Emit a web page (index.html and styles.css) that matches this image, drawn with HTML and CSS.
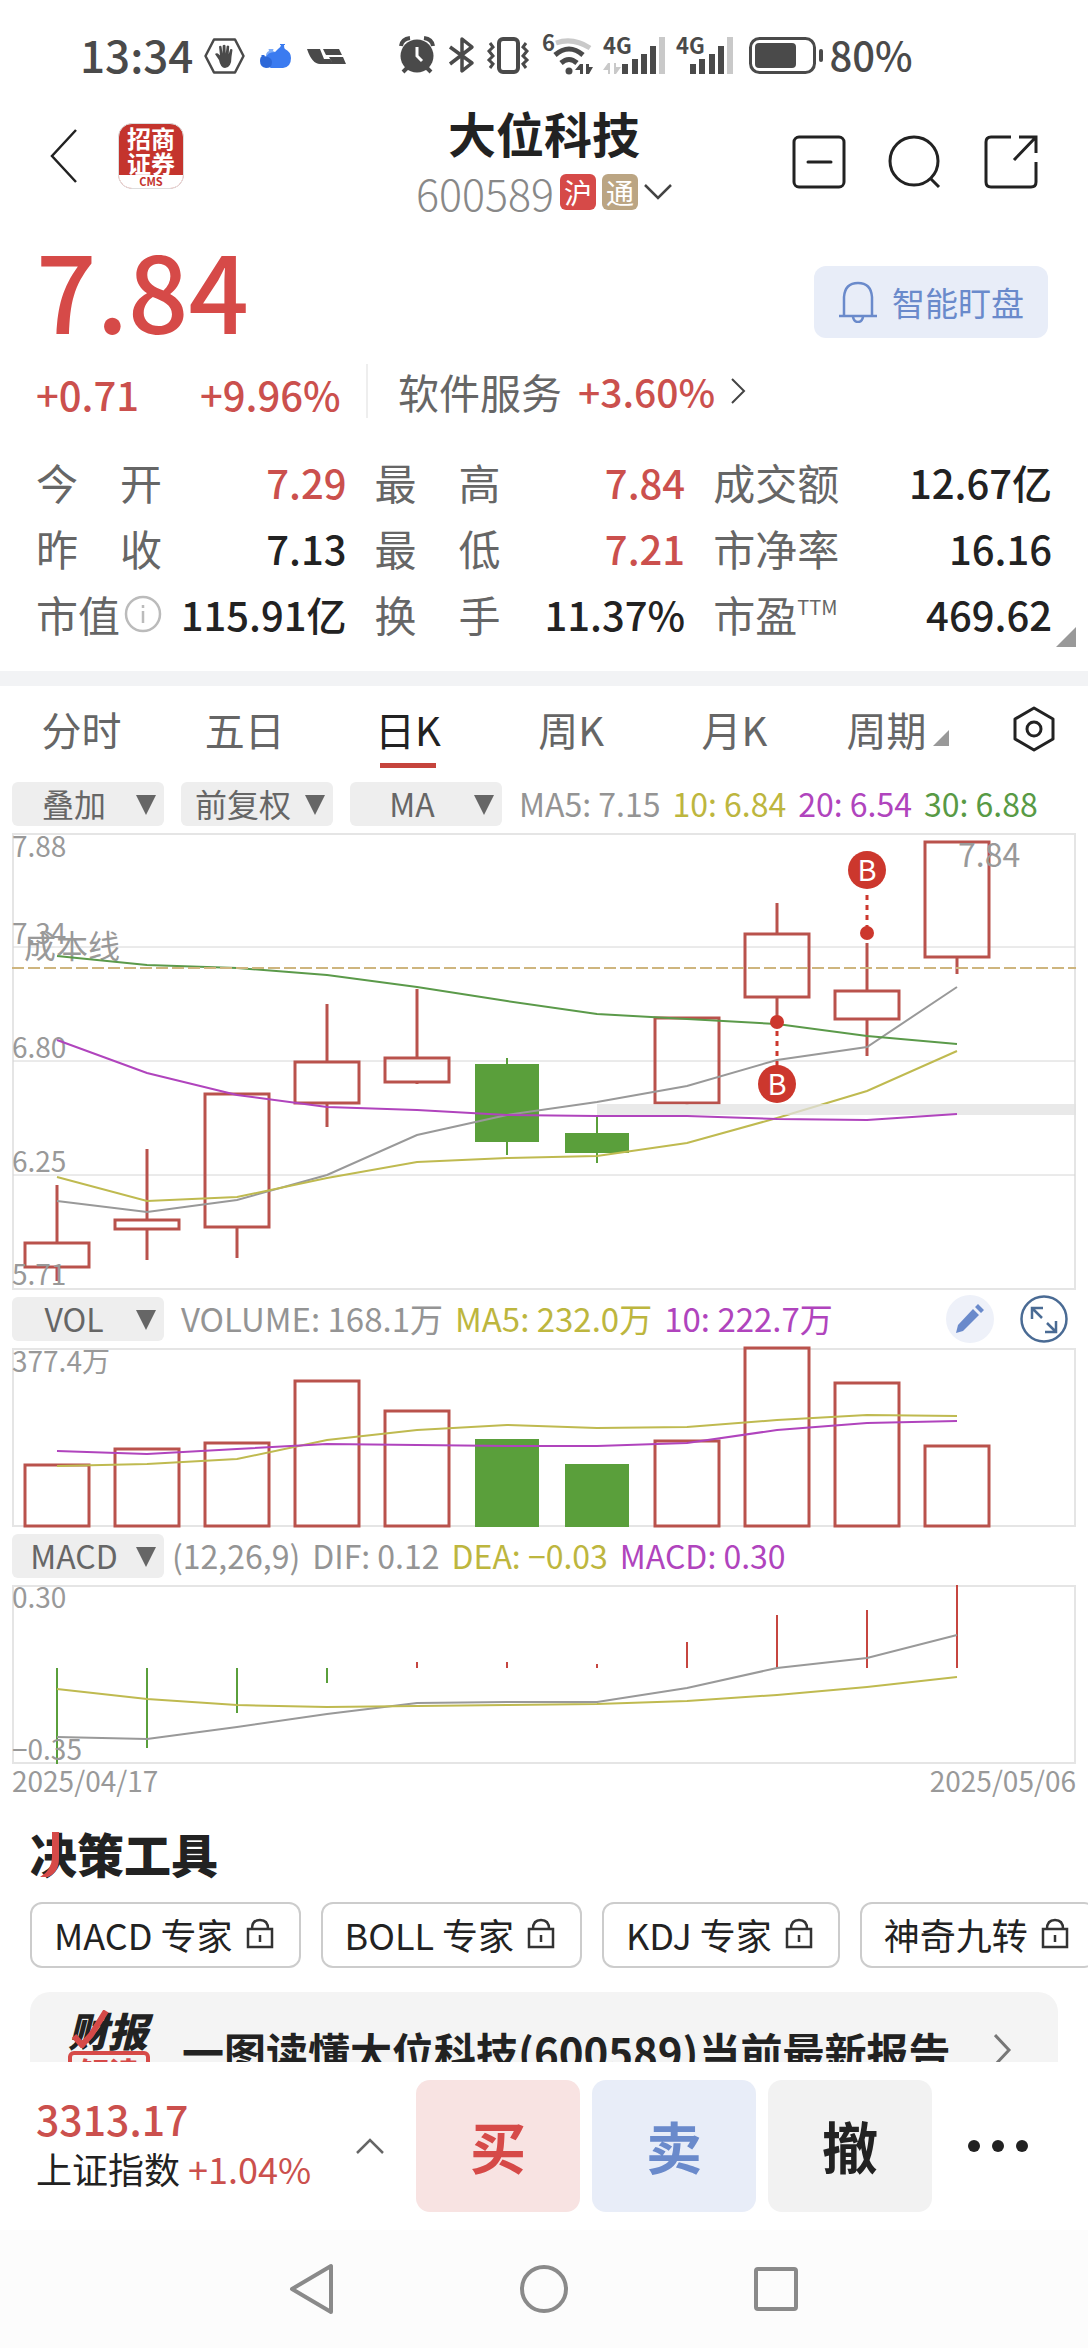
FILE: index.html
```html
<!DOCTYPE html>
<html lang="zh-CN">
<head>
<meta charset="utf-8">
<meta name="viewport" content="width=device-width, initial-scale=1">
<title>大位科技 600589</title>
<link rel="stylesheet" href="styles.css">
</head>
<body>
<div class="status">
  <span class="status-text">13:34</span>
  <svg class="status-left" width="144" height="44" viewBox="202 34 144 44" aria-hidden="true">
    <path d="M213 39.500h21l8.500 16.500-8.500 16.500h-21l-8.500-16.500z" fill="none" stroke="#4a4a4a" stroke-width="2.500" stroke-linejoin="round"/>
    <path d="M218 60l-4-6q2-1.500 4 .5l1 1-1-9q1.500-1.500 2.500 0l1 7 .2-8q1.500-1.500 2.800 0l.2 8 1-7.500q1.500-1 2.500.3l-.5 8 1.500-5q1.500-1 2.300.5l-1 7q0 11-6.500 11.300-4.500-.3-6-8.100z" fill="#4a4a4a"/>
    <path d="M265 60q-1-8 3-9l-.5-2h5l-.5 2q5 1 5 9z" fill="#7fadf7"/>
    <path d="M270 68q-6-2-5-10 1-6 9-6l3-3q3-2 3-4h-1v-1h5v1h-1q0 3 1 4 6 3 6 9 0 9-8 10z" fill="#3b7bf0"/>
    <path d="M265 68q-6-1-6-7 0-4 2-5l-1-1h4l-1 1q8 1 8 6 0 6-6 6z" fill="#2d68d8"/>
    <path d="M306 49h13l4 10h6l3 5h-13q-8 0-13-15zM322 49h16l3 6h-16zM328 57h14l3 7h-13z" fill="#4a4a4a"/>
  </svg>
  <svg class="status-right" width="426" height="44" viewBox="396 34 426 44" aria-hidden="true">
    <g fill="#4a4a4a" stroke="#4a4a4a">
      <circle cx="416" cy="56" r="16.500" stroke="none"/>
      <path d="M400 46q1-7 9-8M432 46q-1-7-9-8M402 72l6-6M430 72l-6-6" fill="none" stroke-width="4"/>
      <path d="M416 47v9l5 5" fill="none" stroke="#fff" stroke-width="3"/>
      <path d="M449 47l22 16-10 8V39l10 8-22 17" fill="none" stroke-width="3.500" stroke-linejoin="round"/>
      <rect x="498" y="39" width="19" height="33" rx="4" fill="none" stroke-width="4"/>
      <path d="M489 43l3 4-4 4 4 5-4 4 4 4-3 4M525 43l-3 4 4 4-4 5 4 4-4 4 3 4" fill="none" stroke-width="3"/>
      <path d="M555 43q17-6 34 5" fill="none" stroke="#c9c9c9" stroke-width="5"/>
      <path d="M554 55q14-12 28 0M560 63q8-7 16 0" fill="none" stroke-width="5"/>
      <circle cx="568" cy="71" r="3.500" stroke="none"/>
      <path d="M574 70h5v-6zM579 64h3v10h-3zM585 64h3v10h-3zM588 74l4-7h-4z" stroke="none"/>
      <path d="M602 70h5v-7zM607 63h2v11h-2zM613 63h2v11h-2zM615 74l5-7h-5z" fill="#c9c9c9" stroke="none"/>
      <path d="M621 64h6v10h-6zM631 59h6v15h-6zM640 54h6v20h-6zM649 46h6v28h-6zM689 64h6v10h-6zM698 59h6v15h-6zM708 54h6v20h-6zM717 46h6v28h-6z" stroke="none"/>
      <path d="M658 37h6v37h-6zM726 37h6v37h-6z" fill="#c9c9c9" stroke="none"/>
      <rect x="749.500" y="38.500" width="64" height="34" rx="9" fill="none" stroke-width="3"/>
      <rect x="754" y="43" width="41" height="25" rx="4" stroke="none"/>
      <rect x="818" y="49" width="4" height="13" rx="2" stroke="none"/>
    </g>
    <text x="541" y="51" class="net-mark">6</text>
    <text x="602" y="54" class="net-mark">4G</text>
    <text x="675" y="54" class="net-mark">4G</text>
  </svg>
  <span class="status-text battery">80%</span>
</div>

<header class="header">
  <div class="header-left">
    <button class="icon-btn" aria-label="返回"><svg width="28" height="54" viewBox="0 0 28 54"><path d="M26 1L2 27l24 26" fill="none" stroke="#222" stroke-width="2.500"/></svg></button>
    <div class="broker">
      <div class="broker-name">招商<br>证券</div>
      <div class="broker-code">CMS</div>
    </div>
  </div>
  <div class="header-title">
    <h1>大位科技</h1>
    <button class="code-row">
      <span class="code">600589</span>
      <span class="tag tag-red">沪</span>
      <span class="tag tag-tan">通</span>
      <svg width="28" height="18" viewBox="0 0 28 18"><path d="M1 2l13 13L27 2" fill="none" stroke="#444" stroke-width="2.500"/></svg>
    </button>
  </div>
  <div class="header-right">
    <button class="icon-btn" aria-label="移除自选"><svg width="54" height="54" viewBox="0 0 54 54" fill="none" stroke="#222" stroke-width="3"><rect x="2" y="2" width="50" height="50" rx="5"/><path d="M16 27h23" stroke-linecap="round"/></svg></button>
    <button class="icon-btn" aria-label="搜索"><svg width="54" height="54" viewBox="0 0 54 54" fill="none" stroke="#222" stroke-width="3"><circle cx="26" cy="26" r="24"/><path d="M42 43l9 9"/></svg></button>
    <button class="icon-btn" aria-label="分享"><svg width="54" height="54" viewBox="0 0 54 54" fill="none" stroke="#222" stroke-width="3"><path d="M27 2H7q-5 0-5 5v40q0 5 5 5h40q5 0 5-5V27M35 2h17v16M52 2L30 25"/></svg></button>
  </div>
</header>

<main class="content">
  <section class="quote">
    <div class="price-row">
      <div class="price">7.84</div>
      <button class="watch-btn">
        <svg width="40" height="42" viewBox="0 0 40 42" fill="none" stroke="#6a8acb" stroke-width="2.500"><path d="M1 35h38M6 35V16Q7 2 20 2t14 14v19M15 36q1 5 5 5t5-5"/></svg>
        智能盯盘
      </button>
    </div>
    <div class="change-row">
      <span class="up change">+0.71</span>
      <span class="up change change-pct">+9.96%</span>
      <a class="sector" href="#sector">
        <span>软件服务</span>
        <span class="up">+3.60%</span>
        <svg width="16" height="26" viewBox="0 0 16 26"><path d="M1 1l12 12L1 25" fill="none" stroke="#444" stroke-width="2"/></svg>
      </a>
    </div>
    <dl class="stats">
      <div><dt>今开</dt><dd class="up">7.29</dd></div>
      <div><dt>最高</dt><dd class="up">7.84</dd></div>
      <div><dt>成交额</dt><dd>12.67亿</dd></div>
      <div><dt>昨收</dt><dd>7.13</dd></div>
      <div><dt>最低</dt><dd class="up">7.21</dd></div>
      <div><dt>市净率</dt><dd>16.16</dd></div>
      <div><dt class="natural">市值<svg width="38" height="38" viewBox="0 0 38 38" fill="none" stroke="#bbb" stroke-width="2.500"><circle cx="19" cy="19" r="17"/><path d="M19 16v12M19 10v3"/></svg></dt><dd>115.91亿</dd></div>
      <div><dt>换手</dt><dd>11.37%</dd></div>
      <div><dt class="natural">市盈<sup>TTM</sup></dt><dd>469.62</dd></div>
    </dl>
    <svg class="expand-corner" width="20" height="20" viewBox="0 0 20 20"><path d="M20 0v20H0z" fill="#999"/></svg>
  </section>

  <nav class="tabs">
    <button>分时</button>
    <button>五日</button>
    <button class="active">日K</button>
    <button>周K</button>
    <button>月K</button>
    <button class="period">周期<svg width="16" height="16" viewBox="0 0 16 16"><path d="M16 0v16H0z" fill="#999"/></svg></button>
    <button aria-label="设置"><svg width="44" height="46" viewBox="0 0 44 46" fill="none" stroke="#222" stroke-width="3"><path d="M22 2l19 11v20L22 44 3 33V13z" stroke-linejoin="round"/><circle cx="22" cy="23" r="7"/></svg></button>
  </nav>

  <section class="charts">
    <figure class="panel">
      <div class="panel-head">
        <label class="picker"><select aria-label="叠加"><option>叠加</option></select><svg width="20" height="20" viewBox="0 0 20 20"><path d="M0 0h20L10 20z"/></svg></label>
        <label class="picker"><select aria-label="复权"><option>前复权</option></select><svg width="20" height="20" viewBox="0 0 20 20"><path d="M0 0h20L10 20z"/></svg></label>
        <label class="picker"><select aria-label="主图指标"><option>MA</option></select><svg width="20" height="20" viewBox="0 0 20 20"><path d="M0 0h20L10 20z"/></svg></label>
        <div class="legend"><span class="c-gray">MA5: 7.15</span><span class="c-yellow">10: 6.84</span><span class="c-purple">20: 6.54</span><span class="c-green">30: 6.88</span></div>
      </div>
      <svg class="chart" viewBox="12 833 1064 457" role="img" aria-label="日K线">
        <rect class="frame" x="13" y="834" width="1062" height="455"/>
        <path class="grid" d="M13 947H1075M13 1061H1075M13 1175H1075"/>
        <g class="axis"><text x="12" y="857">7.88</text><text x="12" y="944">7.34</text><text x="12" y="1058">6.80</text><text x="12" y="1172">6.25</text></g>
        <g class="rise">
          <path d="M57 1185V1243M57 1267V1281M147 1149V1220M147 1229V1260M237 1227V1258M327 1004V1062M327 1103V1127M417 989V1058M417 1082V1084M687 1103V1105M777 903V934M777 997V1016M867 943V991M867 1019V1056M957 957V974"/>
          <rect x="25" y="1243" width="64" height="24"/><rect x="115" y="1220" width="64" height="9"/><rect x="205" y="1094" width="64" height="133"/><rect x="295" y="1062" width="64" height="41"/><rect x="385" y="1058" width="64" height="24"/><rect x="655" y="1018" width="64" height="85"/><rect x="745" y="934" width="64" height="63"/><rect x="835" y="991" width="64" height="28"/><rect x="925" y="842" width="64" height="115"/>
        </g>
        <g class="fall"><path d="M507 1058V1155M597 1117V1163"/><rect x="476" y="1065" width="62" height="76"/><rect x="566" y="1134" width="62" height="18"/></g>
        <g class="axis"><text x="12" y="1285">5.71</text></g>
        <text class="note" x="24" y="958">成本线</text>
        <text class="note" x="958" y="867">7.84</text>
        <polyline class="line s-gray" points="57,1201 147,1212 237,1200 327,1175 417,1135 507,1115 597,1102 687,1086 777,1060 867,1047 957,987"/>
        <polyline class="line s-yellow" points="57,1177 147,1201 237,1197 327,1178 417,1162 507,1158 597,1156 687,1143 777,1118 867,1091 957,1051"/>
        <rect class="gap-band" x="597" y="1104" width="479" height="11"/>
        <polyline class="line s-purple" points="57,1040 147,1073 237,1095 327,1107 417,1110 507,1115 597,1116 687,1116 777,1119 867,1120 957,1114"/>
        <polyline class="line s-green" points="57,956 147,965 237,968 327,975 417,987 507,1001 597,1014 687,1019 777,1024 867,1036 957,1044"/>
        <path class="cost" d="M12 968H1076"/>
        <g class="mark">
          <path d="M867 895V928M777 1031V1066"/>
          <circle cx="867" cy="870" r="19"/><circle cx="867" cy="933" r="7"/><circle cx="777" cy="1084" r="19"/><circle cx="777" cy="1022" r="7"/>
          <text x="867" y="881">B</text><text x="777" y="1095">B</text>
        </g>
      </svg>
    </figure>

    <figure class="panel">
      <div class="panel-head">
        <label class="picker"><select aria-label="副图指标一"><option>VOL</option></select><svg width="20" height="20" viewBox="0 0 20 20"><path d="M0 0h20L10 20z"/></svg></label>
        <div class="legend legend-volume"><span class="c-gray">VOLUME: 168.1万</span><span class="c-yellow">MA5: 232.0万</span><span class="c-purple">10: 222.7万</span></div>
        <div class="panel-tools">
          <button class="icon-btn" aria-label="画线"><svg width="48" height="48" viewBox="0 0 48 48"><circle cx="24" cy="24" r="24" fill="#eef1f9"/><path d="M10 38l2-8L27 14l6 6-16 16zM29 12l3-3 6 6-3 3z" fill="#6a8acb"/></svg></button>
          <button class="icon-btn" aria-label="全屏"><svg width="48" height="48" viewBox="0 0 48 48" fill="none" stroke="#4a6b94" stroke-width="2.500"><circle cx="24" cy="24" r="22.500"/><path d="M12 24V13h11M12 13l10 10M36 26v11H25M36 37L27 28"/></svg></button>
        </div>
      </div>
      <svg class="chart" viewBox="12 1348 1064 179" role="img" aria-label="成交量">
        <rect class="frame" x="13" y="1349" width="1062" height="177"/>
        <g class="axis"><text x="12" y="1372">377.4万</text></g>
        <g class="rise"><rect x="25" y="1465" width="64" height="61"/><rect x="115" y="1449" width="64" height="77"/><rect x="205" y="1443" width="64" height="83"/><rect x="295" y="1381" width="64" height="145"/><rect x="385" y="1411" width="64" height="115"/><rect x="655" y="1441" width="64" height="85"/><rect x="745" y="1348" width="64" height="178"/><rect x="835" y="1383" width="64" height="143"/><rect x="925" y="1446" width="64" height="80"/></g>
        <g class="fall"><rect x="476" y="1440" width="62" height="86"/><rect x="566" y="1465" width="62" height="61"/></g>
        <polyline class="line s-yellow" points="57,1466 147,1464 237,1459 327,1440 417,1430 507,1425 597,1428 687,1427 777,1420 867,1415 957,1416"/>
        <polyline class="line s-purple" points="57,1451 147,1454 237,1449 327,1444 417,1445 507,1446 597,1446 687,1443 777,1430 867,1423 957,1421"/>
      </svg>
    </figure>

    <figure class="panel">
      <div class="panel-head tight">
        <label class="picker"><select aria-label="副图指标二"><option>MACD</option></select><svg width="20" height="20" viewBox="0 0 20 20"><path d="M0 0h20L10 20z"/></svg></label>
        <div class="legend"><span class="c-gray">(12,26,9)</span><span class="c-gray">DIF: 0.12</span><span class="c-yellow">DEA: −0.03</span><span class="c-purple">MACD: 0.30</span></div>
      </div>
      <svg class="chart" viewBox="12 1585 1064 179" role="img" aria-label="MACD">
        <rect class="frame" x="13" y="1586" width="1062" height="177"/>
        <path class="bar-fall" d="M57 1668V1764M147 1668V1748M237 1668V1713M327 1668V1683"/>
        <path class="bar-rise" d="M417 1668V1662M507 1668V1662M597 1668V1664M687 1668V1642M777 1668V1615M867 1668V1610M957 1668V1585"/>
        <g class="axis"><text x="12" y="1608">0.30</text><text x="12" y="1760">−0.35</text></g>
        <polyline class="line s-gray" points="57,1737 147,1739 237,1727 327,1714 417,1703 507,1702 597,1702 687,1688 777,1668 867,1658 957,1635"/>
        <polyline class="line s-yellow" points="57,1689 147,1699 237,1705 327,1707 417,1706 507,1705 597,1704 687,1701 777,1695 867,1687 957,1677"/>
      </svg>
    </figure>
    <div class="dates"><time>2025/04/17</time><time>2025/05/06</time></div>
  </section>

  <section class="tools">
    <h2>决策工具<svg class="title-stroke" width="20" height="46" viewBox="0 0 20 46"><path d="M12 0h7v26q0 15-11 19H0Q12 38 12 25z" fill="#d64a48"/></svg></h2>
    <div class="pills">
      <button>MACD 专家<svg width="28" height="32" viewBox="0 0 28 32"><path d="M2 11h24v18H2zM6 11Q6 2 14 2t8 9M14 17v7"/></svg></button>
      <button>BOLL 专家<svg width="28" height="32" viewBox="0 0 28 32"><path d="M2 11h24v18H2zM6 11Q6 2 14 2t8 9M14 17v7"/></svg></button>
      <button>KDJ 专家<svg width="28" height="32" viewBox="0 0 28 32"><path d="M2 11h24v18H2zM6 11Q6 2 14 2t8 9M14 17v7"/></svg></button>
      <button>神奇九转<svg width="28" height="32" viewBox="0 0 28 32"><path d="M2 11h24v18H2zM6 11Q6 2 14 2t8 9M14 17v7"/></svg></button>
    </div>
    <a class="report" href="#report">
      <span class="report-logo">
        <span class="report-word">财报<svg class="report-stroke" width="42" height="38" viewBox="0 0 42 38"><path d="M3 26l8 9 9-10L35 1" fill="none" stroke="#d64a48" stroke-width="6"/></svg></span>
        <span class="report-sub">解读</span>
      </span>
      <span class="report-text">一图读懂大位科技(600589)当前最新报告</span>
      <svg width="18" height="32" viewBox="0 0 18 32"><path d="M1 1l14 15L1 31" fill="none" stroke="#777" stroke-width="3"/></svg>
    </a>
  </section>
</main>

<footer class="trade">
  <button class="index">
    <span class="index-value">3313.17</span>
    <span class="index-name">上证指数 <span class="up">+1.04%</span></span>
  </button>
  <svg class="caret" width="28" height="16" viewBox="0 0 28 16"><path d="M1 15L14 2l13 13" fill="none" stroke="#666" stroke-width="2.500"/></svg>
  <button class="action buy">买</button>
  <button class="action sell">卖</button>
  <button class="action cancel">撤</button>
  <button class="icon-btn more" aria-label="更多"><svg width="60" height="12" viewBox="0 0 60 12" fill="#222"><circle cx="6" cy="6" r="6"/><circle cx="30" cy="6" r="6"/><circle cx="54" cy="6" r="6"/></svg></button>
</footer>
<nav class="system-nav">
  <button class="icon-btn" aria-label="系统返回"><svg width="48" height="52" viewBox="0 0 48 52"><path d="M43 3v46L4 26z"/></svg></button>
  <button class="icon-btn" aria-label="主屏幕"><svg width="48" height="52" viewBox="0 0 48 52"><circle cx="24" cy="26" r="22"/></svg></button>
  <button class="icon-btn" aria-label="最近任务"><svg width="48" height="52" viewBox="0 0 48 52"><rect x="4" y="6" width="40" height="40" rx="2"/></svg></button>
</nav>
</body>
</html>
```
FILE: styles.css
```css
* { box-sizing: border-box; }

body {
  margin: 0;
  height: 100vh;
  display: flex;
  flex-direction: column;
  overflow: hidden;
  background: #fff;
  color: #222;
  font-family: "Noto Sans CJK SC", "Noto Sans", sans-serif;
}

button, select { font: inherit; color: inherit; border: 0; background: none; padding: 0; margin: 0; }
a { color: inherit; text-decoration: none; }
h1, h2, dl, dd, figure { margin: 0; }
svg { display: block; flex: none; }
.icon-btn { display: flex; }
.up { color: #cb504d; }

/* system status bar */
.status {
  display: flex;
  align-items: center;
  height: 100px;
  padding: 0 80px;
  flex: none;
}
.status-text { padding-top: 8px; font-size: 44px; line-height: 48px; font-weight: 500; color: #4a4a4a; white-space: nowrap; }
.status-text.battery { font-size: 40px; }
.status svg { overflow: visible; }
.status-left { margin: 12px 0 0 10px; }
.status-right { margin: 12px 6px 0 50px; }
.net-mark { font-size: 22px; font-weight: 700; fill: #4a4a4a; }

/* page header */
.header {
  display: grid;
  grid-template-columns: 1fr auto 1fr;
  align-items: center;
  padding: 0 50px;
  flex: none;
}
.header-left { display: flex; align-items: center; gap: 40px; padding-bottom: 8px; }
.broker {
  width: 66px;
  border-radius: 14px;
  overflow: hidden;
  background: #c4342d;
  border: 1px solid #ddd;
  color: #fff;
  text-align: center;
}
.broker-name { padding-top: 1px; font-size: 24px; line-height: 25px; font-weight: 700; }
.broker-code { background: #fff; color: #c4342d; font-size: 11px; line-height: 13px; font-weight: 700; }
.header-title { display: flex; flex-direction: column; align-items: center; }
.header-title h1 { font-size: 48px; line-height: 64px; font-weight: 700; }
.code-row { display: flex; align-items: center; gap: 6px; height: 56px; }
.code { font-size: 43px; line-height: 48px; font-weight: 300; color: #888; }
.tag { width: 36px; height: 36px; border-radius: 6px; color: #fff; font-size: 28px; line-height: 36px; text-align: center; }
.tag-red { background: #d64a48; }
.tag-tan { background: #bba583; }
.header-right { display: flex; justify-content: flex-end; gap: 42px; padding-top: 4px; }

.content { flex: 1; min-height: 0; overflow: hidden; }

/* quote summary */
.quote { position: relative; padding: 0 36px 24px; border-bottom: 15px solid #f2f3f5; }
.price-row { display: flex; justify-content: space-between; height: 144px; }
.price { font-size: 106px; line-height: 136px; font-weight: 500; color: #d64a48; }
.watch-btn {
  display: flex;
  align-items: center;
  gap: 14px;
  height: 72px;
  margin: 46px 4px 0 0;
  padding: 0 24px;
  border-radius: 12px;
  background: #e8edf8;
  color: #6a8acb;
  font-size: 33px;
}
.change-row { display: flex; align-items: center; font-size: 40px; line-height: 54px; }
.change-row .up { font-weight: 500; }
.change { width: 164px; height: 54px; line-height: 60px; }
.change-pct { width: 166px; }
.sector {
  display: flex;
  align-items: center;
  gap: 16px;
  padding-left: 30px;
  border-left: 2px solid #eee;
  color: #666;
  font-size: 41px;
}
.sector .up { font-size: 39px; }
.stats {
  display: grid;
  grid-template-columns: 11fr 11fr 12fr;
  column-gap: 28px;
  padding-top: 31px;
}
.stats div { display: flex; justify-content: space-between; font-size: 42px; line-height: 66px; white-space: nowrap; }
.stats dt { width: 3em; color: #666; text-align-last: justify; }
.stats dt.natural { display: flex; align-items: center; gap: 4px; text-align-last: left; }
.stats sup { align-self: flex-start; font-size: 20px; line-height: 52px; margin-left: -4px; }
.stats dd { font-weight: 500; font-size: 40px; }
.expand-corner { position: absolute; right: 12px; bottom: 24px; }

/* period tabs */
.tabs { display: grid; grid-template-columns: repeat(6, 3fr) 2fr; height: 88px; }
.tabs button { position: relative; display: flex; align-items: center; justify-content: center; padding-bottom: 2px; font-size: 40px; color: #666; }
.tabs .active { color: #222; }
.tabs .active::after { content: ""; position: absolute; bottom: 6px; width: 56px; height: 5px; background: #c5443c; }
.tabs .period svg { margin: 18px 0 0 6px; }

/* charts */
.charts { padding: 8px 12px 0; }
.panel + .panel { margin-top: 7px; }
.panel-head { display: flex; align-items: center; gap: 17px; height: 44px; margin-bottom: 7px; }
.panel-head.tight { gap: 8px; }
.picker { display: grid; align-items: center; width: 152px; height: 44px; border-radius: 6px; background: #eee; flex: none; }
.picker select {
  grid-area: 1 / 1;
  appearance: none;
  width: 100%;
  height: 44px;
  padding: 0 28px 2px 0;
  font-size: 32px;
  line-height: 42px;
  color: #666;
  text-align: center;
}
.picker svg { grid-area: 1 / 1; justify-self: end; margin: 2px 8px 0 0; fill: #666; pointer-events: none; }
.legend { display: flex; gap: 12px; font-size: 32px; line-height: 42px; padding-bottom: 2px; white-space: nowrap; }
.legend-volume { font-size: 33px; }
.panel-tools { display: flex; gap: 26px; margin: 0 8px 0 auto; }
.c-gray { color: #949494; }
.c-yellow { color: #bdb63e; }
.c-purple { color: #b044bd; }
.c-green { color: #589a45; }
.chart { width: 100%; height: auto; overflow: visible; }
.frame { fill: none; stroke: #e5e5e5; stroke-width: 2; }
.grid { fill: none; stroke: #d6d6d6; stroke-width: 1; }
.axis text { font-size: 28px; fill: #999; }
.note { font-size: 32px; fill: #999; }
.line { fill: none; stroke-width: 2; }
.s-gray { stroke: #999; }
.s-yellow { stroke: #bfba50; }
.s-purple { stroke: #b044bd; }
.s-green { stroke: #5b9a4a; }
.rise { fill: none; stroke: #b9524c; stroke-width: 3; }
.fall { fill: #5a9f3b; stroke: #5a9f3b; stroke-width: 2; }
.bar-rise { stroke: #c64640; stroke-width: 2; }
.bar-fall { stroke: #5a9f3b; stroke-width: 2; }
.gap-band { fill: #e2e2e2; fill-opacity: 0.75; }
.cost { stroke: #ceb57e; stroke-width: 2; stroke-dasharray: 12 4; }
.mark circle { fill: #cc372d; }
.mark path { stroke: #cc372d; stroke-width: 3; stroke-dasharray: 5 5; }
.mark text { font-size: 29px; fill: #fff; text-anchor: middle; }
.dates { display: flex; justify-content: space-between; font-size: 28px; line-height: 32px; color: #999; }

/* decision tools */
.tools { padding: 25px 30px 0; }
.tools h2 { position: relative; font-size: 47px; line-height: 64px; font-weight: 900; }
.title-stroke { position: absolute; left: 10px; top: 11px; }
.pills { display: flex; gap: 20px; margin: 17px -30px 24px 0; overflow: hidden; }
.pills button {
  display: flex;
  align-items: center;
  gap: 13px;
  flex: none;
  height: 66px;
  padding: 0 25px 2px 22px;
  border: 2px solid #ccc;
  border-radius: 12px;
  font-size: 36px;
  white-space: nowrap;
}
.pills svg { fill: none; stroke: #333; stroke-width: 2.5; }
.report {
  display: flex;
  align-items: center;
  height: 120px;
  padding: 0 46px 4px 38px;
  border-radius: 20px;
  background: #f4f4f4;
}
.report-logo { width: 114px; flex: none; }
.report-word { position: relative; display: block; font-size: 40px; line-height: 42px; font-weight: 900; font-style: italic; }
.report-stroke { position: absolute; left: 3px; top: 1px; }
.report-sub { display: block; width: 82px; border: 4px solid #d64a48; border-radius: 6px; color: #d64a48; font-size: 30px; line-height: 32px; font-weight: 900; text-align: center; }
.report-text { flex: 1; font-size: 42px; font-weight: 700; white-space: nowrap; }

/* trade bar */
.trade { display: flex; align-items: center; gap: 12px; padding: 18px 60px 18px 36px; flex: none; background: #fff; }
.index { flex: 1; display: flex; flex-direction: column; padding-bottom: 6px; text-align: left; white-space: nowrap; }
.index-value { font-size: 41px; line-height: 50px; color: #cb504d; font-weight: 500; }
.index-name { font-size: 36px; line-height: 50px; }
.caret { margin-right: 20px; }
.action { width: 164px; height: 132px; padding-bottom: 4px; border-radius: 14px; font-size: 56px; font-weight: 700; }
.buy { background: #f8e3e2; color: #d64a48; }
.sell { background: #e8edf8; color: #6a8acb; }
.cancel { background: #f2f2f2; color: #222; }
.more { margin-left: 24px; }

/* system navigation */
.system-nav { display: flex; justify-content: center; align-items: center; gap: 184px; height: 118px; flex: none; background: #fcfcfc; }
.system-nav svg { fill: none; stroke: #8a8a8a; stroke-width: 4; stroke-linejoin: round; }
```
